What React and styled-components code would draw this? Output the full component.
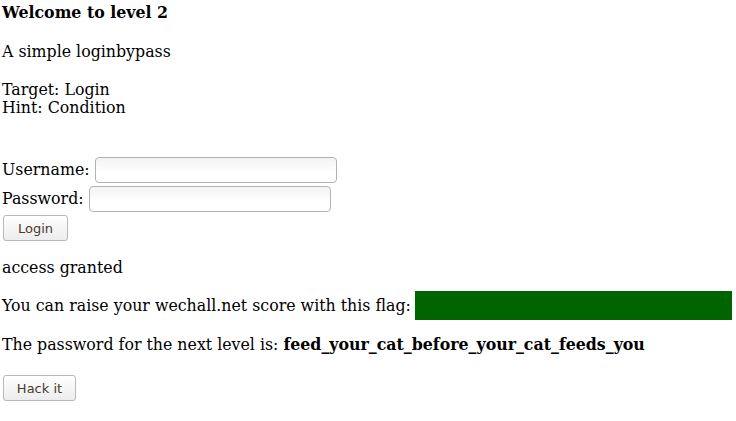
import React from 'react'
import styled, { createGlobalStyle } from 'styled-components'

const GlobalStyle = createGlobalStyle`
  body {
    margin: 0;
    background: #ffffff;
    color: #000000;
    font-family: "DejaVu Serif", "Liberation Serif", serif;
    font-size: 15.8px;
  }
`

const Page = styled.div`
  padding: 4px 4px 0 2px;
  display: flex;
  flex-direction: column;
`

const Title = styled.div`
  font-weight: bold;
  line-height: 18px;
`

const Text = styled.div`
  line-height: 18px;
  margin-top: ${(p) => p.top || 0}px;
`

const Form = styled.form`
  display: flex;
  flex-direction: column;
  align-items: flex-start;
  gap: 3px;
  margin-top: 40px;
`

const Field = styled.label`
  display: flex;
  align-items: center;
  gap: 5px;
  line-height: 18px;
`

const Input = styled.input`
  box-sizing: border-box;
  width: 242px;
  height: 26px;
  border: 1px solid #b3b3b3;
  border-radius: 4px;
  background: linear-gradient(#f3f3f3, #ffffff 60%);
  padding: 2px 6px;
  font-size: 13px;
`

const Button = styled.button`
  box-sizing: border-box;
  height: 26px;
  width: ${(p) => p.w}px;
  margin-left: 1px;
  border: 1px solid #b8b8b8;
  border-radius: 3px;
  background: linear-gradient(#ffffff, #ececec);
  color: #4a3a2c;
  font-family: "DejaVu Sans", "Open Sans", sans-serif;
  font-size: 13px;
  padding: 0;
`

const FlagRow = styled.div`
  display: flex;
  align-items: center;
  margin-top: 14px;
  line-height: 18px;
`

const Flag = styled.span`
  flex: 1;
  height: 29px;
  margin-left: 4px;
  background: #006400;
`

const Strong = styled.b`
  font-weight: bold;
`

const Actions = styled.div`
  margin-top: 21px;
`

export default function App() {
  return (
    <>
      <GlobalStyle />
      <Page>
        <Title>Welcome to level 2</Title>
        <Text top={21}>A simple loginbypass</Text>
        <Text top={20}>Target: Login</Text>
        <Text>Hint: Condition</Text>
        <Form onSubmit={(e) => e.preventDefault()}>
          <Field>
            Username:<Input type="text" name="username" />
          </Field>
          <Field>
            Password:<Input type="password" name="password" />
          </Field>
          <Button w={65}>Login</Button>
        </Form>
        <Text top={18}>access granted</Text>
        <FlagRow>
          You can raise your wechall.net score with this flag:
          <Flag />
        </FlagRow>
        <Text top={16}>
          The password for the next level is:{' '}
          <Strong>feed_your_cat_before_your_cat_feeds_you</Strong>
        </Text>
        <Actions>
          <Button w={73}>Hack it</Button>
        </Actions>
      </Page>
    </>
  )
}
